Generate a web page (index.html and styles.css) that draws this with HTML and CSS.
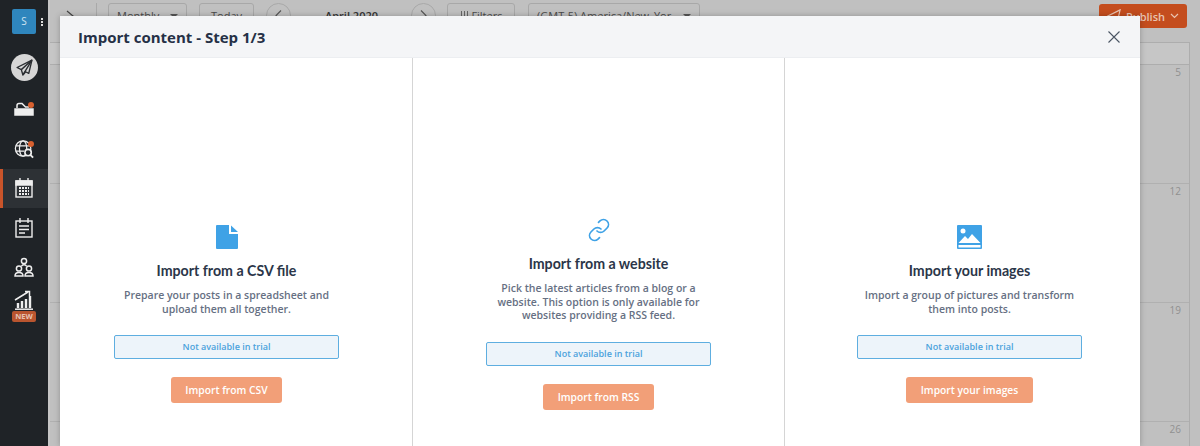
FILE: index.html
```html
<!DOCTYPE html>
<html lang="en">

<head>
    <meta charset="UTF-8">
    <title>Import content</title>
    <link rel="stylesheet" href="styles.css">
</head>

<body>

    <!-- sidebar -->
    <nav class="sidebar">
        <div class="account">
            <div class="avatar">S</div>
            <div class="dots"><i></i><i></i><i></i></div>
        </div>
        <div class="send">
            <svg width="17" height="17" viewBox="0 0 16 16" fill="none" stroke="#2a2d31" stroke-width="1.300" stroke-linejoin="round">
                <path d="M15 1 1 8l4 2 1.500 5 2.500-3 3 1.500z" />
                <path d="M15 1 5 10M15 1 6.500 15" />
            </svg>
        </div>
        <div class="nav-item">
            <svg width="20" height="14" viewBox="0 0 20 14" fill="none" stroke="#eee" stroke-width="1.500">
                <path d="M1 7h18v6H1z" fill="#eee" />
                <path d="M3 6V3.500Q3 1.500 5 1.500h3l3.500 3.500H15" />
            </svg>
            <span class="dot"></span>
        </div>
        <div class="nav-item">
            <svg width="20" height="21" viewBox="0 0 22 22" fill="none" stroke="#eee" stroke-width="1.400">
                <circle cx="10" cy="11" r="8.500" />
                <ellipse cx="10" cy="11" rx="4" ry="8.500" />
                <path d="M2 8h16M2 14h9" />
                <circle cx="15.500" cy="15.500" r="3.500" fill="#1f2327" stroke-width="1.800" />
                <path d="m18 18 3 3" stroke-width="2" />
            </svg>
            <span class="dot"></span>
        </div>
        <div class="nav-item active">
            <svg width="18" height="20" viewBox="0 0 18 20" fill="none" stroke="#eee" stroke-width="1.400">
                <rect x="1" y="3" width="16" height="16" />
                <path d="M1 3h16v4H1z" fill="#eee" />
                <path d="M5 0v4M13 0v4" />
                <path d="M4 10h10M4 13h10M4 16h10" stroke-width="1.800" stroke-dasharray="2 1" />
            </svg>
        </div>
        <div class="nav-item">
            <svg width="18" height="20" viewBox="0 0 18 20" fill="none" stroke="#eee" stroke-width="1.400">
                <rect x="1" y="3" width="16" height="16" />
                <path d="M5 0v5M13 0v5M4 8h10M4 11.500h10M4 15h6" />
            </svg>
        </div>
        <div class="nav-item">
            <svg width="20" height="20" viewBox="0 0 20 20" fill="none" stroke="#eee" stroke-width="1.500">
                <circle cx="10" cy="4" r="2.600" />
                <circle cx="5" cy="11.500" r="2.600" />
                <circle cx="15" cy="11.500" r="2.600" />
                <path d="M1 19q0-3.500 4-3.500t4 3.500zM11 19q0-3.500 4-3.500t4 3.500zM7.500 9q2.500-2.500 5 0" />
            </svg>
        </div>
        <div class="nav-item nav-stats">
            <svg width="20" height="20" viewBox="0 0 20 20" fill="none" stroke="#eee" stroke-width="1.500">
                <path d="M1 10 14 2M11 1.500h4.500V6" />
                <path d="M4 13v5M8 11v7M12 9v9M16 6v12" stroke-width="2.400" />
                <path d="M1 19.200h18" />
            </svg>
            <span class="new-badge">NEW</span>
        </div>
    </nav>

    <!-- page behind the dialog -->
    <main class="page">
        <div class="toolbar">
            <div class="toggle">
                <svg width="8" height="12" viewBox="0 0 8 12" fill="none" stroke="#444" stroke-width="1.200"><path d="m1 1 6 5-6 5" /></svg>
            </div>
            <div class="tool select monthly">Monthly <b class="caret"></b></div>
            <div class="tool today">Today</div>
            <div class="round">
                <svg width="7" height="11" viewBox="0 0 7 11" fill="none" stroke="#555" stroke-width="1.100"><path d="M6 .5 1 5.500l5 5" /></svg>
            </div>
            <div class="month">April 2020</div>
            <div class="round">
                <svg width="7" height="11" viewBox="0 0 7 11" fill="none" stroke="#555" stroke-width="1.100"><path d="m1 .5 5 5-5 5" /></svg>
            </div>
            <div class="tool filters">
                <svg width="9" height="9" viewBox="0 0 9 9" fill="none" stroke="#666"><path d="M1.500 0v9M4.500 0v9M7.500 0v9" /></svg>
                Filters
            </div>
            <div class="tool select zone">(GMT-5) America/New_Yor <b class="caret"></b></div>
            <div class="publish">
                <svg width="14" height="14" viewBox="0 0 16 16" fill="none" stroke="#e9c4b2" stroke-width="1.300"><path d="M15 1 1 8l4 2 1.500 5 2.500-3 3 1.500z" /></svg>
                Publish
                <svg width="9" height="6" viewBox="0 0 9 6" fill="none" stroke="#e9c4b2" stroke-width="1.200"><path d="m1 1 3.500 3.500L8 1" /></svg>
            </div>
        </div>
        <div class="calendar">
            <div class="cal-head"></div>
            <div class="cal-row"><span>5</span></div>
            <div class="cal-row"><span>12</span></div>
            <div class="cal-row"><span>19</span></div>
            <div class="cal-row last"><span>26</span></div>
        </div>
    </main>

    <!-- import dialog -->
    <div class="modal">
        <div class="modal-header">
            <h1>Import content - Step 1/3</h1>
            <svg class="close" width="12" height="12" viewBox="0 0 12 12" fill="none" stroke="#4a5463" stroke-width="1.100">
                <path d="m.5.5 11 11M11.500.5l-11 11" />
            </svg>
        </div>
        <div class="modal-body">
            <section class="option">
                <svg class="option-icon" width="22" height="24" viewBox="0 0 22 24">
                    <path d="M1 0h12v9h9v14a1 1 0 0 1-1 1H1a1 1 0 0 1-1-1V1a1 1 0 0 1 1-1z" fill="#3fa2e6" />
                    <path d="M15 .500 22 7h-7z" fill="#3fa2e6" />
                </svg>
                <h2>Import from a CSV file</h2>
                <p>Prepare your posts in a spreadsheet and<br>upload them all together.</p>
                <div class="notice">Not available in trial</div>
                <button>Import from CSV</button>
            </section>
            <section class="option">
                <svg class="option-icon" width="24" height="24" viewBox="0 0 24 24" fill="none" stroke="#3fa2e6" stroke-width="1.700" stroke-linecap="round">
                    <path d="M10 13a5 5 0 0 0 7.070 0l3-3a5 5 0 0 0-7.070-7.070l-1.500 1.500" />
                    <path d="M14 11a5 5 0 0 0-7.070 0l-3 3a5 5 0 0 0 7.070 7.070l1.500-1.500" />
                </svg>
                <h2>Import from a website</h2>
                <p>Pick the latest articles from a blog or a<br>website. This option is only available for<br>websites providing a RSS feed.</p>
                <div class="notice">Not available in trial</div>
                <button>Import from RSS</button>
            </section>
            <section class="option">
                <svg class="option-icon" width="25" height="24" viewBox="0 0 25 24">
                    <rect width="25" height="24" rx="1" fill="#3fa2e6" />
                    <circle cx="6" cy="6" r="2.500" fill="#fff" />
                    <path d="M1.500 18 8 11l3 3 4-5 8.500 9z" fill="#fff" />
                    <path d="M1.500 20h22v2.500h-22z" fill="#fff" />
                </svg>
                <h2>Import your images</h2>
                <p>Import a group of pictures and transform<br>them into posts.</p>
                <div class="notice">Not available in trial</div>
                <button>Import your images</button>
            </section>
        </div>
    </div>

</body>

</html>
```

FILE: styles.css
```css
* {
    box-sizing: border-box;
}

body {
    margin: 0;
    height: 446px;
    overflow: hidden;
    display: flex;
    background-color: #c0c0c0;
    font-family: 'Open Sans', sans-serif;
}

/* sidebar */

.sidebar {
    width: 48px;
    height: 446px;
    flex-shrink: 0;
    background-color: #1f2327;
    display: flex;
    flex-direction: column;
}

.account {
    display: flex;
    align-items: flex-start;
    gap: 5px;
    padding: 9px 0 0 12px;
    height: 45px;
}

.avatar {
    width: 24px;
    height: 25px;
    border-radius: 2px;
    background-color: #2f86bd;
    color: #cfe4f1;
    font-size: 10px;
    line-height: 25px;
    text-align: center;
}

.dots {
    display: flex;
    flex-direction: column;
    gap: 1px;
    margin-top: 9px;
}

.dots i {
    width: 2px;
    height: 2px;
    background-color: #ddd;
}

.send {
    width: 27px;
    height: 27px;
    margin: 9px 0 8.500px 11px;
    border-radius: 50%;
    background-color: #d6d6d6;
    display: flex;
    align-items: center;
    justify-content: center;
}

.nav-item {
    position: relative;
    height: 39.500px;
    display: flex;
    align-items: center;
    justify-content: center;
}

.nav-item.active {
    background-color: #2d3135;
    border-left: 3px solid #c9542a;
    padding-right: 3px;
}

.dot {
    position: absolute;
    top: 12px;
    right: 14px;
    width: 6px;
    height: 6px;
    border-radius: 50%;
    background-color: #d8602f;
}

.nav-stats {
    flex-direction: column;
    justify-content: flex-start;
    gap: 1px;
    height: 44px;
    padding-top: 3px;
}

.new-badge {
    background-color: #b9552f;
    color: #e6c3b3;
    border-radius: 2px;
    font-size: 7.500px;
    font-weight: 700;
    line-height: 11px;
    padding: 0 3px;
}

/* page behind the dialog */

.page {
    flex: 1;
    min-width: 0;
    height: 446px;
    border-left: 2px solid #c6c6c6;
    display: flex;
    flex-direction: column;
}

.toolbar {
    height: 32px;
    padding: 3px 13px 0 2px;
    display: flex;
    align-items: flex-start;
    font-size: 11px;
    color: #4b4b4b;
}

.toggle {
    width: 45px;
    height: 29px;
    padding: 7px 0 0 14px;
    border-right: 1px solid #a9a9a9;
    margin-right: 11px;
}

.tool {
    height: 25px;
    border: 1px solid #a8a8a8;
    border-radius: 3px;
    line-height: 23px;
    text-align: center;
}

.select {
    display: flex;
    align-items: center;
    justify-content: space-between;
    padding: 0 8px;
}

.caret {
    border: 4px solid transparent;
    border-top-color: #555;
    margin-top: 4px;
}

.monthly {
    width: 79px;
}

.today {
    width: 55px;
    margin-left: 12px;
}

.round {
    width: 25px;
    height: 25px;
    border: 1px solid #a8a8a8;
    border-radius: 50%;
    margin-left: 12px;
    display: flex;
    align-items: center;
    justify-content: center;
}

.month {
    width: 108px;
    padding-left: 34px;
    font-weight: 600;
    line-height: 25px;
    color: #333;
    white-space: nowrap;
}

.filters {
    width: 68px;
    margin-left: 11px;
}

.zone {
    width: 172px;
    margin-left: 13px;
    white-space: nowrap;
    overflow: hidden;
}

.publish {
    margin-left: auto;
    width: 88px;
    height: 24px;
    margin-top: 1px;
    border-radius: 3px;
    background-color: #c44d1e;
    color: #e9c4b2;
    font-weight: 600;
    display: flex;
    align-items: center;
    justify-content: center;
    gap: 5px;
}

.calendar {
    margin: 10px 10px 0 0;
    flex: 1;
    border-right: 1px solid #adadad;
}

.cal-head {
    height: 23px;
    border-top: 1px solid #adadad;
    border-bottom: 1px solid #adadad;
    background-color: #c6c6c6;
}

.cal-row {
    height: 119px;
    border-bottom: 1px solid #b0b0b0;
    padding-right: 8px;
    text-align: right;
    font-size: 10px;
    color: #909090;
}

.cal-row.last {
    height: 24px;
    border-bottom: none;
}

/* import dialog */

.modal {
    position: absolute;
    top: 16px;
    left: 60px;
    width: 1080px;
    height: 430px;
    background-color: #fff;
    box-shadow: 0 0 6px rgba(0, 0, 0, 0.25);
    overflow: hidden;
    display: flex;
    flex-direction: column;
}

.modal-header {
    height: 42px;
    flex-shrink: 0;
    padding: 0 20px 0 18px;
    background-color: #f4f5f7;
    border-bottom: 1px solid #eceef1;
    display: flex;
    align-items: center;
    justify-content: space-between;
}

.modal-header h1 {
    margin: 0;
    font-size: 15px;
    font-weight: 700;
    color: #253046;
}

.close {
    margin-top: 1px;
}

.modal-body {
    flex: 1;
    display: flex;
    margin-left: -19px;
}

.option {
    width: 372px;
    flex-shrink: 0;
    padding-top: 124px;
    border-right: 1px solid #d5d5d5;
    display: flex;
    flex-direction: column;
    align-items: center;
    justify-content: center;
}

.option:last-child {
    width: 370px;
}

.option-icon {
    display: block;
}

.option h2 {
    margin: 13px 0 0;
    font-family: 'Lato', sans-serif;
    font-size: 14.200px;
    font-weight: 700;
    line-height: 18px;
    color: #2b3649;
}

.option p {
    margin: 9px 0 0;
    font-size: 10.500px;
    font-weight: 600;
    line-height: 13.500px;
    text-align: center;
    color: #667083;
}

.notice {
    width: 225px;
    height: 24px;
    margin-top: 19px;
    border: 1px solid #5eaee0;
    border-radius: 2px;
    background-color: #edf4fa;
    color: #4ba2dc;
    font-size: 9px;
    font-weight: 600;
    line-height: 22px;
    text-align: center;
}

.option button {
    height: 26px;
    margin-top: 18px;
    padding: 0 14.500px;
    border: none;
    border-radius: 3px;
    background-color: #f29f78;
    color: #fff;
    font-family: 'Open Sans', sans-serif;
    font-size: 10.300px;
    font-weight: 600;
}
```
